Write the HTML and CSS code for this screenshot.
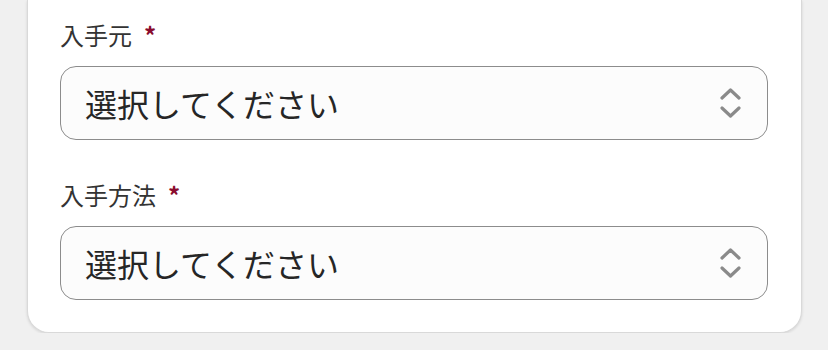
FILE: index.html
```html
<!DOCTYPE html>
<html lang="ja">
<head>
<meta charset="utf-8">
<link rel="stylesheet" href="styles.css">
</head>
<body>
<div class="page">
  <div class="card">
    <div class="field">
      <label class="label">入手元<span class="req">*</span></label>
      <div class="select">
        <span class="select-text">選択してください</span>
        <svg class="chevrons" width="21" height="30" viewBox="0 0 21 30"><polyline points="2,10 10.5,2 19,10" /><polyline points="2,20 10.5,28 19,20" /></svg>
      </div>
    </div>
    <div class="field">
      <label class="label">入手方法<span class="req">*</span></label>
      <div class="select">
        <span class="select-text">選択してください</span>
        <svg class="chevrons" width="21" height="30" viewBox="0 0 21 30"><polyline points="2,10 10.5,2 19,10" /><polyline points="2,20 10.5,28 19,20" /></svg>
      </div>
    </div>
  </div>
</div>
</body>
</html>
```

FILE: styles.css
```css
html, body {
  margin: 0;
  padding: 0;
  background: #f0f0f0;
  font-family: "Noto Sans CJK JP", "Noto Sans", sans-serif;
}
.page {
  padding: 0 26px 0 27px;
}
.card {
  background: #fff;
  border: 1px solid #d9d9d9;
  border-top: none;
  border-radius: 0 0 22px 22px;
  box-shadow: 0 1px 3px rgba(0, 0, 0, 0.12);
  padding: 20px 33px 32px 32px;
}
.field + .field {
  margin-top: 40px;
}
.label {
  display: block;
  font-size: 24px;
  line-height: 30px;
  color: #333;
}
.req {
  color: #8a0c2e;
  margin-left: 12px;
  font-weight: bold;
  font-size: 24px;
}
.select {
  margin-top: 16px;
  height: 72px;
  border: 1px solid #8c8c8c;
  border-radius: 16px;
  background: #fcfcfc;
  display: flex;
  align-items: center;
  justify-content: space-between;
  padding: 0 26px 0 24px;
}
.select-text {
  font-size: 32px;
  color: #262626;
}
.chevrons polyline {
  fill: none;
  stroke: #8a8a8a;
  stroke-width: 3.2;
  stroke-linecap: round;
  stroke-linejoin: round;
}
```
